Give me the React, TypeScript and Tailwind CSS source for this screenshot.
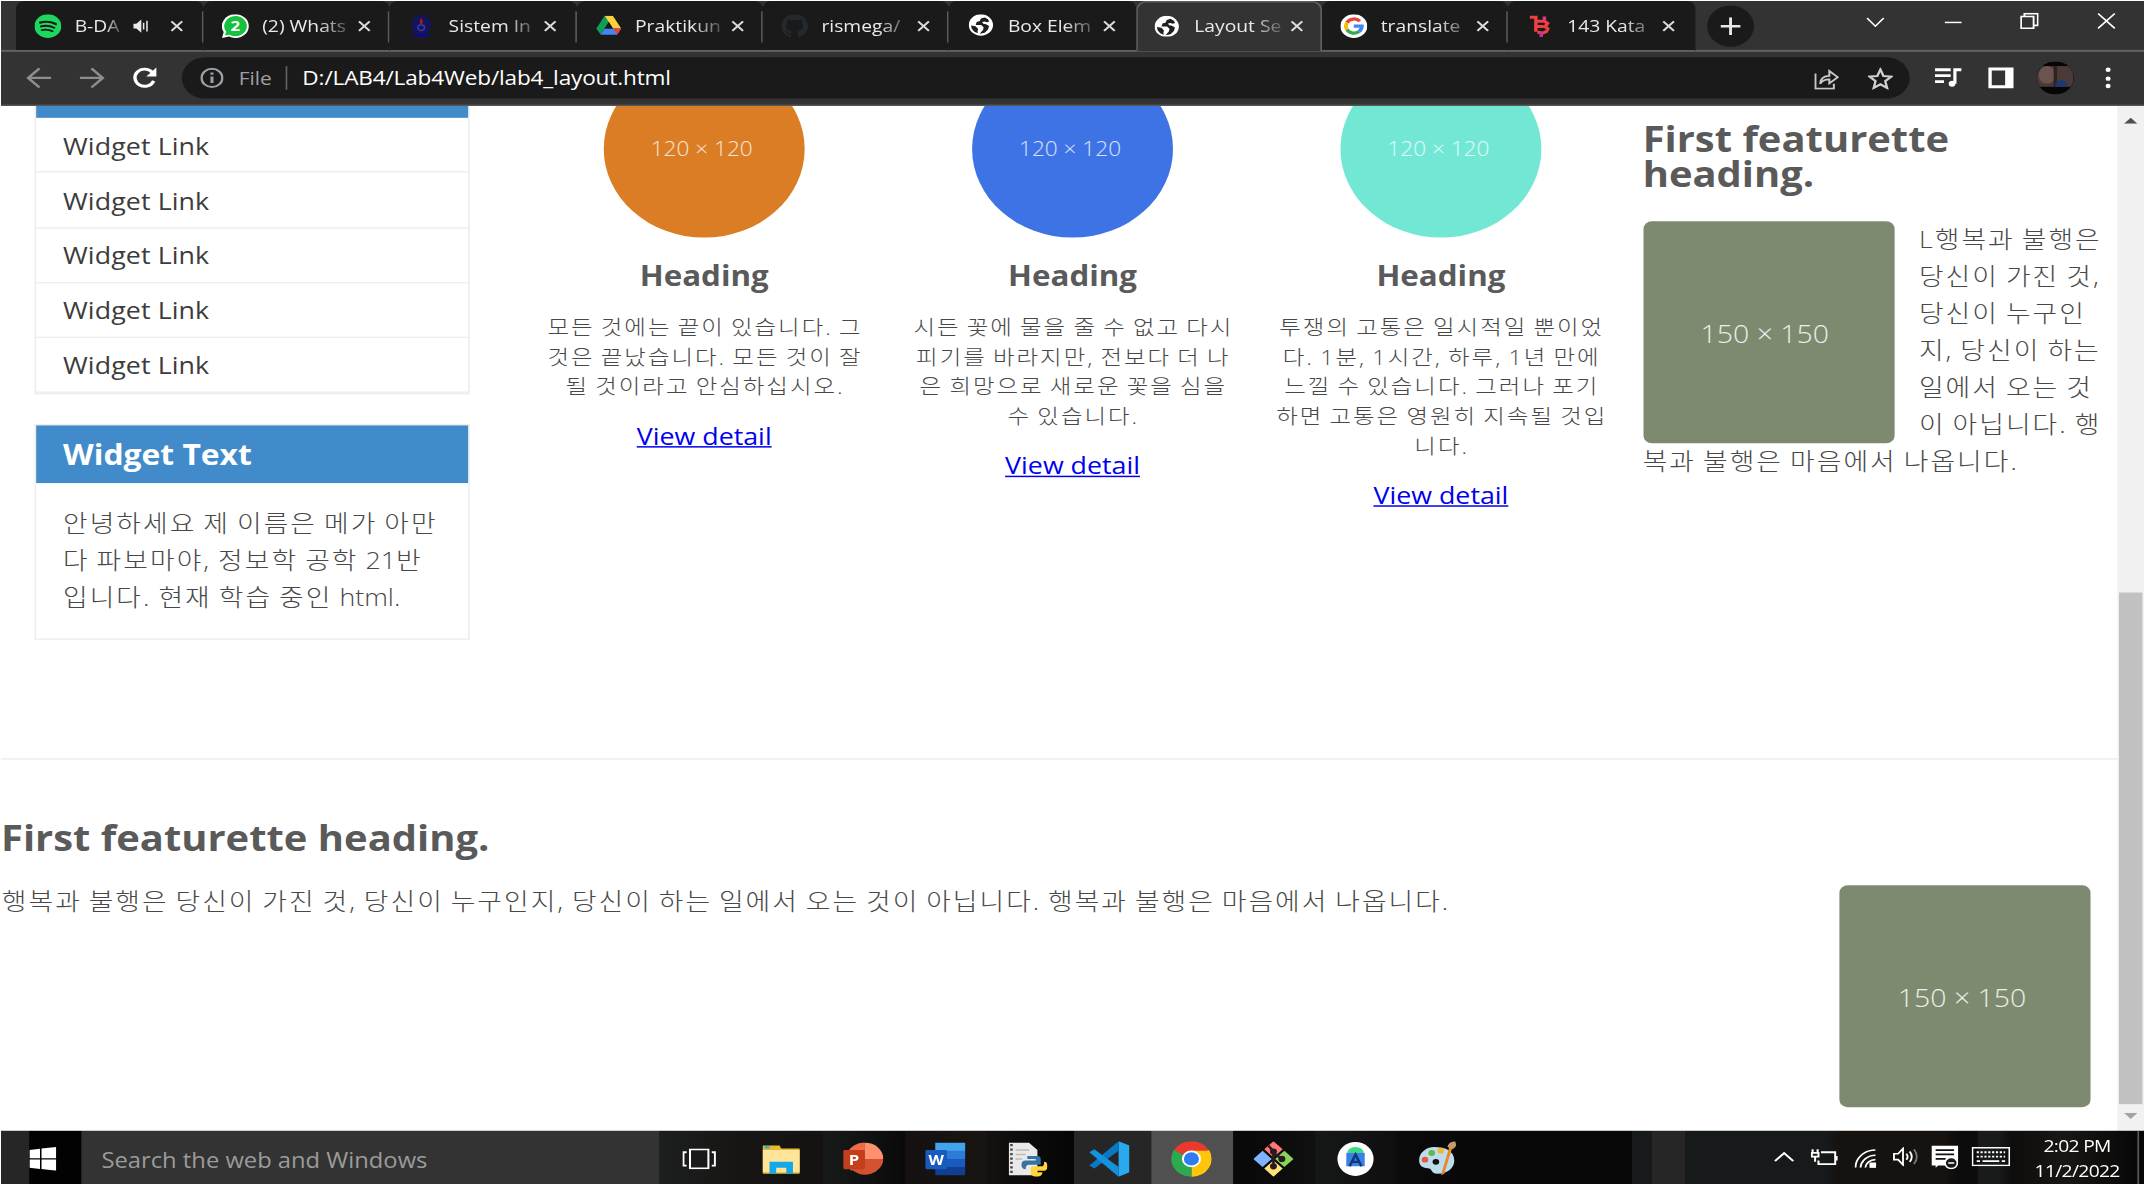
import React from "react";

type IconProps = { className?: string };

/* ---------- favicons ---------- */

const Spotify = () => (
  <svg viewBox="0 0 16 16" className="size-4">
    <circle cx="8" cy="8" r="8" fill="#1ed760" />
    <g fill="none" stroke="#1a1a1a" strokeLinecap="round">
      <path d="M3.4 5.6c3-.9 6.6-.6 9.3 1" strokeWidth="1.5" />
      <path d="M3.9 8.2c2.700-.8 5.500-.4 7.900.9" strokeWidth="1.300" />
      <path d="M4.300 10.700c2.300-.600 4.500-.400 6.500.800" strokeWidth="1.100" />
    </g>
  </svg>
);

const WhatsApp = () => (
  <svg viewBox="0 0 16 16" className="size-4">
    <path d="M8 0a8 8 0 1 1-3.800 15L0 16l1-4A8 8 0 0 1 8 0z" fill="#fff" />
    <path d="M8 1.200a6.800 6.800 0 1 1-3.500 12.600l-2.700.6.7-2.600A6.800 6.800 0 0 1 8 1.200z" fill="#16c13e" />
    <text x="8" y="11.600" textAnchor="middle" fontSize="10" fontWeight="700" fill="#fff" fontFamily="Open Sans, sans-serif">
      2
    </text>
  </svg>
);

const Crest = () => (
  <svg viewBox="0 0 16 16" className="size-4">
    <path d="M8 0l2.500 1.500L13 3l1 4-1 4-2 2h2v2.500H3V13h2l-2-2-1-4 1-4 2.500-1.500z" fill="#14145c" />
    <path d="M8 2.500l1 2-.5 2h-1l-.5-2z" fill="#b01818" />
    <circle cx="8" cy="9" r="2" fill="none" stroke="#3a3a9c" />
    <path d="M4 14h8" stroke="#0a0a88" strokeWidth="1.500" />
  </svg>
);

const Drive = () => (
  <svg viewBox="0 0 16 14" className="h-[13px] w-4">
    <path d="M5.400 0h5.200L5.300 9.300 2.700 13.700 0 9.200z" fill="#0f9d58" />
    <path d="M5.400 0h5.200L16 9.200h-5.300z" fill="#ffcf3d" />
    <path d="M5.300 9.200H16l-2.700 4.600H2.700z" fill="#4285f4" />
    <path d="M10.700 9.200H16l-2.700 4.600z" fill="#ea4335" />
    <path d="M8 4.600l2.700 4.600H5.300z" fill="#1a1a1a" />
  </svg>
);

const GitHub = () => (
  <svg viewBox="0 0 16 16" className="size-4" fill="#24292e">
    <path d="M8 0a8 8 0 0 0-2.530 15.590c.4.070.55-.17.55-.38v-1.490c-2.230.48-2.700-.94-2.700-.94-.36-.92-.89-1.170-.89-1.170-.73-.5.05-.49.05-.49.800.060 1.230.830 1.230.830.710 1.220 1.870.870 2.330.660.070-.520.280-.870.500-1.070-1.770-.200-3.640-.890-3.640-3.950 0-.870.310-1.590.820-2.150-.080-.200-.360-1.020.080-2.120 0 0 .670-.210 2.200.820a7.600 7.600 0 0 1 4 0c1.530-1.040 2.200-.820 2.200-.820.440 1.100.160 1.920.080 2.120.510.560.820 1.270.820 2.150 0 3.070-1.870 3.750-3.650 3.950.290.250.540.730.540 1.480v2.190c0 .210.150.460.550.380A8 8 0 0 0 8 0z" />
  </svg>
);

const Globe = () => (
  <svg viewBox="0 0 16 16" className="size-[14.500px]">
    <circle cx="8" cy="8" r="8" fill="#fff" />
    <path
      d="M10.500 2.300L8 3.200 7.300 5 5.200 5.800 4.600 8h3.600l1.600 1.600-.3 2-2.300 2.900 3.300-.8 2.200-2.400.7-2.600-2-1.200L9.600 7 8.800 5.800l1.700-.5 1.500.6 1.500-.5-.8-1.700z"
      fill="#1f1f1f"
    />
    <path d="M1.500 8.300l3 .7 1.700 2-.4 1.500.3 1.700-2.400-1.200-1.700-2.300z" fill="#1f1f1f" />
  </svg>
);

const Google = () => (
  <svg viewBox="0 0 16 16" className="size-4">
    <circle cx="8" cy="8" r="8" fill="#fff" />
    <g fill="none" strokeWidth="2.200">
      <path d="M11.600 4.700A4.800 4.800 0 0 0 3.900 5.600" stroke="#ea4335" />
      <path d="M3.900 5.600a4.800 4.800 0 0 0 0 4.800" stroke="#fbbc05" />
      <path d="M3.900 10.400a4.800 4.800 0 0 0 7.200 1.200" stroke="#34a853" />
      <path d="M11.100 11.600A4.800 4.800 0 0 0 12.800 8H8" stroke="#4285f4" />
    </g>
  </svg>
);

const BMark = () => (
  <svg viewBox="0 0 14 16" className="h-4 w-[13px]" fill="none" strokeWidth="2.200">
    <path d="M0 1.500h5M4 1v11M4 4.500h5.500l2 1.500-1.500 2.300 1.700 1.700-1 2-2.200 1L5 12.500M4.500 8.300H9" stroke="#f0403f" />
    <path d="M7.500 12.500v3.500" stroke="#c22fa0" />
    <path d="M9.500 4V1" stroke="#e0358a" />
  </svg>
);

/* ---------- small chrome glyphs ---------- */

const Cross = ({ className = "" }: IconProps) => (
  <svg viewBox="0 0 10 10" className={className} stroke="currentColor" strokeWidth="1.700" fill="none">
    <path d="M1 1l8 8M9 1L1 9" />
  </svg>
);

const Speaker = () => (
  <svg viewBox="0 0 11 10" className="h-[10px] w-[10px]" fill="#e8eaed">
    <path d="M0 3.200h2L5.300 0v10L2 6.800H0z" />
    <path d="M6.800 2.500v5M9 1v8" stroke="#e8eaed" strokeWidth="1" />
  </svg>
);

type Tab = { title: string; icon: React.ReactNode; active?: boolean; audio?: boolean; divider?: boolean };

const tabs: Tab[] = [
  { title: "B-DA", icon: <Spotify />, audio: true, divider: true },
  { title: "(2) Whats", icon: <WhatsApp />, divider: true },
  { title: "Sistem In", icon: <Crest />, divider: true },
  { title: "Praktikun", icon: <Drive />, divider: true },
  { title: "rismega/", icon: <GitHub />, divider: true },
  { title: "Box Elem", icon: <Globe /> },
  { title: "Layout Se", icon: <Globe />, active: true },
  { title: "translate", icon: <Google />, divider: true },
  { title: "143 Kata", icon: <BMark /> },
];

function TabItem({ tab }: { tab: Tab }) {
  const shape = tab.active
    ? "bg-[#333333] border-t border-x border-[#606060] rounded-t-[6px] pb-px"
    : "bg-[#1a1a1a] rounded-t-[5px] border-b border-[#606060]";
  return (
    <div className={`relative flex h-[34px] items-center ${shape} ${tab.audio ? "w-[112px]" : "w-[111.350px]"}`}>
      <div className={`flex w-4 shrink-0 justify-center ${tab.active ? "ml-[10px]" : "ml-[11px]"}`}>{tab.icon}</div>
      <div className={`ml-2 shrink-0 whitespace-nowrap text-[11.500px] leading-4 text-[#e8eaed] [mask-image:linear-gradient(to_right,black_65%,#0003)] ${tab.audio ? "w-[28px]" : "w-[52px]"}`}>
        {tab.title}
      </div>
      {tab.audio && (
        <div className="ml-[7px]">
          <Speaker />
        </div>
      )}
      <Cross className={`size-2 shrink-0 text-[#dcdcdc] ${tab.audio ? "ml-[12px]" : "ml-[5px]"}`} />
      {tab.divider && <div className="absolute right-0 top-[7px] h-[21px] w-px bg-[#5a5a5a]" />}
    </div>
  );
}

function TabStrip() {
  return (
    <div className="flex h-[34px] bg-[#333333]">
      <div className="w-[9px] shrink-0 border-b border-[#606060]" />
      {tabs.map((t) => (
        <TabItem key={t.title} tab={t} />
      ))}
      <div className="flex flex-1 items-center border-b border-[#606060] pl-[7px]">
        <div className="mt-px flex size-7 items-center justify-center rounded-full bg-[#1a1a1a]">
          <svg viewBox="0 0 12 12" className="size-3" stroke="#e8e8e8" strokeWidth="1.700">
            <path d="M6 0v12M0 6h12" />
          </svg>
        </div>
        <div className="mb-[6px] ml-auto flex text-white">
          <div className="flex w-[46px] justify-center">
            <svg viewBox="0 0 11 7" className="mr-px mt-[3px] h-[7px] w-[11px]" stroke="currentColor" fill="none">
              <path d="M.5.500l5 5.500 5-5.500" />
            </svg>
          </div>
          <div className="flex w-[46px] justify-center">
            <div className="mt-[6px] h-px w-[10px] bg-white" />
          </div>
          <div className="flex w-[46px] justify-center">
            <svg viewBox="0 0 11 11" className="mr-px size-[11px]" stroke="currentColor" fill="none" strokeWidth="1.100">
              <path d="M.5 2.500h7.500v8H.5zM2.500 2.500v-2h8v8H8" />
            </svg>
          </div>
          <div className="flex w-[45px] justify-center">
            <svg viewBox="0 0 11 11" className="size-[11px]" stroke="currentColor" fill="none">
              <path d="M.5.500l10 10M10.500.5l-10 10" />
            </svg>
          </div>
        </div>
      </div>
    </div>
  );
}

function Toolbar() {
  return (
    <div className="flex h-[37px] items-center border-b border-[#555555] bg-[#333333]">
      <svg viewBox="0 0 15 14" className="ml-[15px] h-[14px] w-[15px]" fill="none" stroke="#8e8e8e" strokeWidth="1.600">
        <path d="M15 7H1M8 .5L1.200 7 8 13.500" />
      </svg>
      <svg viewBox="0 0 15 14" className="ml-[17px] h-[14px] w-[15px]" fill="none" stroke="#8e8e8e" strokeWidth="1.600">
        <path d="M0 7h14M7 .5L13.800 7 7 13.500" />
      </svg>
      <svg viewBox="0 0 16 16" className="ml-[16px] size-4" fill="none" stroke="#fff" strokeWidth="2">
        <path d="M13.200 10A5.800 5.800 0 1 1 12.300 4.200L14 6" />
        <path d="M14.800 1v6h-6z" fill="#fff" stroke="none" />
      </svg>
      <div className="ml-[14px] flex h-7 w-[1032px] items-center rounded-full bg-[#1a1a1a] text-sm">
        <svg viewBox="0 0 14 14" className="ml-[11px] size-[14px]" fill="none" stroke="#9aa0a6" strokeWidth="1.400">
          <circle cx="7" cy="7" r="6.200" />
          <path d="M7 6v4.500M7 3.300v1.500" strokeWidth="1.800" />
        </svg>
        <span className="ml-[9px] w-[28px] pt-px text-[12.500px] text-[#9aa0a6]">File</span>
        <div className="h-4 w-px bg-[#5f6368]" />
        <span className="ml-[9px] whitespace-nowrap pt-px text-[13.500px] tracking-[-0.100px] text-white">D:/LAB4/Lab4Web/lab4_layout.html</span>
        <svg viewBox="0 0 15 15" className="ml-auto size-[15px]" fill="none" stroke="#c8c8c8" strokeWidth="1.200">
          <path d="M.7 4v10.300h11V11" />
          <path d="M3.500 11c.3-4 2.500-5.300 5.500-5.300V2.300l5 4.200-5 4.200V8C6.500 8 4.700 8.800 3.500 11z" />
        </svg>
        <svg viewBox="0 0 15 15" className="ml-[17px] mr-[10px] size-[15px]" fill="none" stroke="#d0d0d0" strokeWidth="1.400">
          <path d="M7.500 1.300l1.800 4.400 4.700.4-3.600 3.100 1.100 4.600-4-2.500-4 2.500 1.100-4.600L1 6.100l4.700-.4z" />
        </svg>
      </div>
      <svg viewBox="0 0 16 14" className="ml-[15px] h-[14px] w-4" fill="none" stroke="#fff" strokeWidth="1.900">
        <path d="M0 1.500h9.500M0 5.500h9.500M0 9.500h5.500M12 11V1.500h4" />
        <circle cx="10.300" cy="11" r="2" fill="#fff" stroke="none" />
      </svg>
      <div className="ml-[16px] flex h-[14px] w-[15px] justify-start border-[2.500px] border-r-[5px] border-white bg-[#333333]" />
      <div className="ml-[14px] flex h-[22px] w-[22px] items-center overflow-hidden rounded-full bg-black">
        <svg viewBox="0 0 22 22" className="size-[22px]">
          <rect width="22" height="22" fill="#060606" />
          <rect y="3" width="22" height="14" fill="#4c3a38" />
          <ellipse cx="6" cy="9" rx="5" ry="6" fill="#6b5350" />
          <path d="M10 3h2v14h-2z" fill="#2c2424" />
          <path d="M11 17c0-6 7-6 7 0z" fill="#1c3a70" />
        </svg>
      </div>
      <div className="ml-[18.500px] flex flex-col gap-[2.500px]">
        <i className="size-[3px] rounded-full bg-white" />
        <i className="size-[3px] rounded-full bg-white" />
        <i className="size-[3px] rounded-full bg-white" />
      </div>
    </div>
  );
}

/* ---------- page ---------- */

const WidgetTitle = ({ children }: { children: React.ReactNode }) => (
  <h3 className="h-[38.300px] bg-[#428bca] pl-4 pt-[0.500px] text-[19px] font-bold leading-[38.300px] text-white">{children}</h3>
);

function Sidebar() {
  return (
    <aside className="ml-5 w-[260px] shrink-0">
      <div className="border border-t-0 border-[#eeeeee]">
        <div className="h-[8.300px] bg-[#428bca]" />
        <ul>
          {[1, 2, 3, 4, 5].map((n) => (
            <li key={n} className="h-[37.200px] border-b border-[#eeeeee] pl-4 pt-[0.300px] leading-[36.200px] tracking-[0.060px] text-[#3c3c3c]">
              Widget Link
            </li>
          ))}
        </ul>
      </div>
      <div className="mt-5 border border-[#eeeeee]">
        <WidgetTitle>Widget Text</WidgetTitle>
        <p className="whitespace-nowrap pb-[14.200px] pl-4 pt-[15.500px] font-light leading-[25.100px] tracking-[1.220px] text-[#484848] [word-spacing:-1.220px]">
          안녕하세요 제 이름은 메가 아만
          <br />
          다 파보마야, 정보학 공학 <span className="tracking-normal">21</span>반
          <br />
          입니다. 현재 학습 중인 <span className="tracking-normal">html.</span>
        </p>
      </div>
    </aside>
  );
}

const columns = [
  { color: "bg-[#db7d25]", lines: ["모든 것에는 끝이 있습니다. 그", "것은 끝났습니다. 모든 것이 잘", "될 것이라고 안심하십시오."] },
  { color: "bg-[#3e73e6]", lines: ["시든 꽃에 물을 줄 수 없고 다시", "피기를 바라지만, 전보다 더 나", "은 희망으로 새로운 꽃을 심을", "수 있습니다."] },
  {
    color: "bg-[#72e8d4]",
    lines: ["투쟁의 고통은 일시적일 뿐이었", "다. 1분, 1시간, 하루, 1년 만에", "느낄 수 있습니다. 그러나 포기", "하면 고통은 영원히 지속될 것입", "니다."],
  },
];

function Column({ color, lines }: { color: string; lines: string[] }) {
  return (
    <div className="flex w-[220px] flex-col items-center">
      <div className={`-mt-[31.200px] flex size-[120px] shrink-0 items-center justify-center rounded-full pr-[3px] pt-[1px] text-[13.500px] font-light leading-5 text-white/80 ${color}`}>
        120 × 120
      </div>
      <h3 className="mt-[16.200px] text-[18.720px] font-bold leading-5">Heading</h3>
      <p className="mt-[14.500px] whitespace-nowrap pl-px text-center text-sm font-light leading-5 tracking-[1.190px] text-[#484848] [word-spacing:-1.120px]">
        {lines.map((l) => (
          <span key={l} className="block">
            {l}
          </span>
        ))}
      </p>
      <a className="mt-[13.700px] leading-5 text-[#0000ee] underline">View detail</a>
    </div>
  );
}

const Thumb = ({ className = "" }: IconProps) => (
  <div className={`flex h-[150.400px] w-[150px] shrink-0 items-center justify-center rounded-[5px] bg-[#7d8a70] pr-[4px] pt-px text-[17px] font-light text-white/85 ${className}`}>
    150 × 150
  </div>
);

function Page() {
  return (
    <main className="h-[692.500px] w-[1263.800px] overflow-hidden bg-white text-[#5a5a5a]">
      <div className="flex h-[441.300px]">
        <Sidebar />
        <section className="ml-[30px] flex items-start">
          {columns.map((c) => (
            <Column key={c.color} {...c} />
          ))}
        </section>
        <section className="ml-[10.500px] w-[268px] pt-[10px]">
          <h2 className="text-[23.850px] font-bold leading-[24.200px]">
            First featurette
            <br />
            heading.
          </h2>
          <div className="mt-[19.400px] whitespace-nowrap font-light leading-[25.100px] tracking-[1.220px] text-[#484848] [word-spacing:-1.220px]">
            <Thumb className="float-left mr-[15px] tracking-normal [word-spacing:0px]" />
            L행복과 불행은
            <br />
            당신이 가진 것,
            <br />
            당신이 누구인
            <br />
            지, 당신이 하는
            <br />
            일에서 오는 것
            <br />
            이 아닙니다. 행
            <br />
            복과 불행은 마음에서 나옵니다.
          </div>
        </section>
      </div>
      <section className="border-t border-[#eeeeee] pt-[40.300px]">
        <h2 className="text-[23.850px] font-bold leading-[24.200px]">First featurette heading.</h2>
        <div className="mt-[18.100px] flex items-start justify-between pr-[15.500px]">
          <p className="whitespace-nowrap pl-[0.500px] pt-[1.500px] font-light leading-[25.100px] tracking-[1.200px] text-[#484848] [word-spacing:-1.250px]">
            행복과 불행은 당신이 가진 것, 당신이 누구인지, 당신이 하는 일에서 오는 것이 아닙니다. 행복과 불행은 마음에서 나옵니다.
          </p>
          <Thumb className="mt-[1.800px]" />
        </div>
      </section>
    </main>
  );
}

function Scrollbar() {
  return (
    <div className="flex flex-1 flex-col items-center bg-[#f1f1f1]">
      <svg viewBox="0 0 8 4" className="mt-2 h-[4px] w-[8px]">
        <path d="M0 4l4-4 4 4z" fill="#505050" />
      </svg>
      <div className="mt-[316.500px] h-[346px] w-[13.500px] bg-[#c1c1c1]" />
      <svg viewBox="0 0 8 4" className="mt-[6px] h-[4px] w-[8px]">
        <path d="M0 0h8L4 4z" fill="#a3a3a3" />
      </svg>
    </div>
  );
}

/* ---------- taskbar ---------- */

const Explorer = () => (
  <svg viewBox="0 0 24 24" className="size-6">
    <path d="M1 3h10l1 2h11v17H1z" fill="#e8b931" />
    <path d="M1 6h22v15H1z" fill="#ffe59a" />
    <path d="M2 3.500h3v1.500H2z" fill="#1ab0e8" />
    <path d="M5 22v-8h14v8h-4v-4H9v4z" fill="#14a8ea" />
  </svg>
);

const PowerPoint = () => (
  <svg viewBox="0 0 24 24" className="size-6">
    <path d="M13 1v11h11A11 11 0 0 0 13 1z" fill="#ff9070" />
    <path d="M13 1v11L5 20A11 11 0 0 1 13 1z" fill="#ed6c47" />
    <path d="M24 12A11 11 0 0 1 4 18l9-6z" fill="#d35230" />
    <rect y="6" width="13" height="13" rx="1" fill="#c43e1c" />
    <text x="6.500" y="16.200" textAnchor="middle" fontSize="10" fontWeight="700" fill="#fff" fontFamily="Open Sans, sans-serif">
      P
    </text>
  </svg>
);

const Word = () => (
  <svg viewBox="0 0 24 24" className="size-6">
    <path d="M6 1h18v6H6z" fill="#41a5ee" />
    <path d="M6 6.500h18V12H6z" fill="#2b7cd3" />
    <path d="M6 12h18v5.500H6z" fill="#185abd" />
    <path d="M6 17.500h18V23H6z" fill="#103f91" />
    <rect y="6" width="13" height="13" rx="1" fill="#185abd" />
    <text x="6.500" y="16" textAnchor="middle" fontSize="9.500" fontWeight="700" fill="#fff" fontFamily="Open Sans, sans-serif">
      W
    </text>
  </svg>
);

const Python = () => (
  <svg viewBox="0 0 24 24" className="size-6">
    <path d="M1 1h12l5 5v17H1z" fill="#e9e9e9" />
    <path d="M2.500 2v20" stroke="#444" strokeWidth="1.500" strokeDasharray="1.500 1.500" />
    <path d="M5 6h8M5 9h6M5 12h4" stroke="#bbb" />
    <path d="M12 10h6q2 0 2 2v4h-7q-2 0-2 3-2.500 0-2.500-3t2.500-3h6v-1h-5z" fill="#3772a4" />
    <path d="M22 14q2 0 2 3t-2 3h-5v1h4q0 3-3.500 3T14 21v-2q0-2 2-2h5q1 0 1-3z" fill="#ffd43b" />
  </svg>
);

const VSCode = () => (
  <svg viewBox="0 0 24 24" className="size-6">
    <path d="M17.500 0L24 3v18l-6.500 3z" fill="#2ba9ee" />
    <path d="M17.500 0v6.500L3 18.500 0 16.500z" fill="#0a79c4" />
    <path d="M17.500 24v-6.500L3 5.500 0 7.500z" fill="#1592dc" />
  </svg>
);

const Chrome = () => (
  <svg viewBox="0 0 24 24" className="size-6">
    <path d="M12 12L1.600 6A12 12 0 0 1 22.400 6z" fill="#ea3a2d" />
    <path d="M12 12l10.400-6A12 12 0 0 1 12 24z" fill="#fdc60a" />
    <path d="M12 12v12A12 12 0 0 1 1.600 6z" fill="#2da94f" />
    <path d="M12 6.500h10.600A12 12 0 0 1 12 24l5-9z" fill="#fdc60a" />
    <path d="M1.600 6L7 15l5 3-2 5.800A12 12 0 0 1 1.600 6z" fill="#2da94f" />
    <circle cx="12" cy="12" r="5.700" fill="#fff" />
    <circle cx="12" cy="12" r="4.500" fill="#2f7cf0" />
  </svg>
);

const Git = () => (
  <svg viewBox="0 0 24 24" className="size-6">
    <path d="M12 0l5.500 5.500L12 11 6.500 5.500z" fill="#ff7676" />
    <path d="M5.500 6.500L11 12l-5.500 5.500L0 12z" fill="#80b3ff" />
    <path d="M18.500 6.500L24 12l-5.500 5.500L13 12z" fill="#8cd35a" />
    <path d="M12 13l5.500 5.500L12 24l-5.500-5.500z" fill="#ffe17a" />
    <g stroke="#2a1c1c" strokeWidth="1.600" fill="#2a1c1c">
      <path d="M9 3l3 4v10M12 8l5 4" fill="none" />
      <circle cx="12" cy="7" r="1.300" />
      <circle cx="17" cy="12" r="1.300" />
      <circle cx="12" cy="17" r="1.300" />
    </g>
  </svg>
);

const AndroidStudio = () => (
  <svg viewBox="0 0 24 24" className="size-6">
    <ellipse cx="12" cy="12" rx="10.800" ry="11.500" fill="#fff" />
    <path d="M7 8a5 4 0 0 1 10 0z" fill="#3ddc84" />
    <path d="M6.500 8h11v9h-11z" fill="#3d7fe8" />
    <path d="M8.500 17L12 9l3.500 8M10 14h4" stroke="#0d3a70" strokeWidth="1.500" fill="none" />
  </svg>
);

const Paint = () => (
  <svg viewBox="0 0 24 24" className="size-6">
    <path d="M10 4c7 0 12 3 12 9 0 5-4 9-10 9-4 0-3-3-5-3.500S1 18 1 13s4-9 9-9z" fill="#bfdcec" />
    <circle cx="11" cy="14" r="2" fill="#111" />
    <circle cx="4.500" cy="12.500" r="2" fill="#e25a4a" />
    <circle cx="8.500" cy="8" r="2" fill="#5fb848" />
    <circle cx="14" cy="6.500" r="2" fill="#f0b930" />
    <path d="M19 4l1.800.500L16 22l-2 1z" fill="#e58a2c" />
    <path d="M18 4c0-2 2-4 4.500-4 .500 2 1.500 3-1.500 5.500z" fill="#c79a6b" />
  </svg>
);

const TaskView = () => (
  <svg viewBox="0 0 20 14" className="mr-px h-[14px] w-5" fill="none" stroke="#fff" strokeWidth="1.200">
    <path d="M4.500.600h11v12.800h-11zM2.500 2.500H.600v9h1.900M17.500 2.500h1.900v9h-1.900" />
  </svg>
);

const apps: { name: string; icon: React.ReactNode; bg: string }[] = [
  { name: "task-view", icon: <TaskView />, bg: "bg-linear-to-r from-[#1c1f1e] to-[#171514]" },
  { name: "explorer", icon: <Explorer />, bg: "bg-linear-to-r from-[#171514] to-[#141312]" },
  { name: "powerpoint", icon: <PowerPoint />, bg: "bg-linear-to-r from-[#181a1a] to-[#0a0a0a]" },
  { name: "word", icon: <Word />, bg: "bg-linear-to-r from-[#141110] to-[#181412]" },
  { name: "python", icon: <Python />, bg: "bg-linear-to-r from-[#141110] to-[#060606]" },
  { name: "vscode", icon: <VSCode />, bg: "bg-linear-to-r from-[#060606] from-[6%] via-[#262626] via-[6%] to-[#262626]" },
  { name: "chrome", icon: <Chrome />, bg: "bg-[#505050]" },
  { name: "git", icon: <Git />, bg: "bg-linear-to-r from-[#080808] to-[#101010]" },
  { name: "android-studio", icon: <AndroidStudio />, bg: "bg-linear-to-r from-[#161817] to-[#0e0e0e]" },
  { name: "paint", icon: <Paint />, bg: "bg-linear-to-r from-[#0b0b0b] to-[#080808]" },
];

function Tray() {
  return (
    <div className="flex items-center text-white">
      <div className="flex w-6 justify-center">
        <svg viewBox="0 0 12 7" className="h-[7px] w-3" fill="none" stroke="currentColor" strokeWidth="1.300">
          <path d="M.5 6.500L6 1l5.500 5.500" />
        </svg>
      </div>
      <div className="flex w-[24.500px] justify-center">
        <svg viewBox="0 0 16 12" className="h-3 w-4" fill="none" stroke="currentColor" strokeWidth="1.200">
          <path d="M6 2.500h8.500v8H4.500V8M15.500 5v3M1 .500v2M4 .500v2M.500 3h4v2.500h-4zM2.500 5.500V9" />
        </svg>
      </div>
      <div className="flex w-[24.500px] justify-center">
        <svg viewBox="0 0 13 13" className="mt-0.5 size-[13px]" fill="none" stroke="currentColor" strokeWidth="1.100">
          <path d="M.600 13A12 12 0 0 1 12.500 1M3.600 13a9 9 0 0 1 9-8.500M6.500 13a6 6 0 0 1 6-5.500" />
          <path d="M9.500 10h3v3h-3z" fill="currentColor" />
        </svg>
      </div>
      <div className="flex w-[23px] justify-center">
        <svg viewBox="0 0 16 13" className="h-[13px] w-4" fill="none" stroke="currentColor" strokeWidth="1.100">
          <path d="M.600 4.500h2.500L6 1v11L3.100 8.500H.600zM8 4.500q1.500 2 0 4M10 3q2.500 3.500 0 7" />
          <path d="M12.500 1.500q3.500 5 0 10" stroke="#777" />
        </svg>
      </div>
      <div className="flex w-6 justify-center">
        <svg viewBox="0 0 16 16" className="size-4">
          <path d="M0 0h16v10l-4 3.500H4L2.500 15v-1.500H0z" fill="#fff" />
          <path d="M2.500 3h11M2.500 6h11M2.500 9h6" stroke="#111" strokeWidth="1.200" />
          <circle cx="11.800" cy="11.800" r="3.700" fill="#181818" stroke="#fff" />
          <path d="M10 11.800h3.600" stroke="#fff" />
        </svg>
      </div>
      <div className="flex w-[31px] justify-center">
        <svg viewBox="0 0 23 13" className="h-[13px] w-[23px]" fill="none" stroke="currentColor">
          <path d="M.500.500h22v12H.500z" />
          <path d="M3 3.500h17M3 6.500h17" strokeDasharray="1.300 1" strokeWidth="1.200" />
          <path d="M3 9.500h2M6.500 9.500h10M18 9.500h2" strokeWidth="1.200" />
        </svg>
      </div>
      <div className="w-[72px] pt-[1.500px] text-center text-[11.500px] leading-[16.800px] tracking-[-0.400px]">
        <div>2:02 PM</div>
        <div>11/2/2022</div>
      </div>
      <div className="h-full w-px bg-[#5a5a5a]" />
      <div className="w-[3px]" />
    </div>
  );
}

function Taskbar() {
  return (
    <div className="flex h-[36.500px] bg-[#050505]">
      <div className="w-[16.500px] bg-[#262626]" />
      <div className="flex w-[31.500px] items-center bg-[#020202]">
        <svg viewBox="0 0 16 16" className="mt-[3px] size-4" fill="#fff">
          <path d="M0 2l6.300-.900v6.400H0zM7.200 1L16 0v7.500H7.200zM0 8.400h6.300v6.400L0 13.900zM7.200 8.400H16V16l-8.800-1.100z" />
        </svg>
      </div>
      <div className="flex w-[344.500px] items-center bg-[#333333] pl-3 pt-[3px] text-[14.200px] text-[#9b9b9b]">Search the web and Windows</div>
      <div className="flex">
        {apps.map((a) => (
          <div key={a.name} className={`flex w-[49.050px] items-center justify-center pt-[3px] ${a.bg}`}>
            {a.icon}
          </div>
        ))}
      </div>
      <div className="flex flex-1 justify-end bg-[linear-gradient(to_right,#080808_0_23%,#171a1a_23%_26%,#262626_26%_31%,#171a1a_31%_52%,#151210_54%_70%,#0c0c0c_72%_75%,#181b1a_75%_78%,#0e0d0c_80%,#191614_88%,#060606)]">
        <Tray />
      </div>
    </div>
  );
}

export default function App() {
  return (
    <div className="h-[1184px] w-[2144px] overflow-hidden bg-white pl-px pt-px">
      <div className="h-[800px] w-[1280px] origin-top-left scale-x-[1.6743] scale-y-[1.4788] overflow-hidden text-base [font-family:'Open_Sans','Noto_Sans_CJK_KR',sans-serif]">
        <TabStrip />
        <Toolbar />
        <div className="flex">
          <Page />
          <Scrollbar />
        </div>
        <Taskbar />
      </div>
    </div>
  );
}
